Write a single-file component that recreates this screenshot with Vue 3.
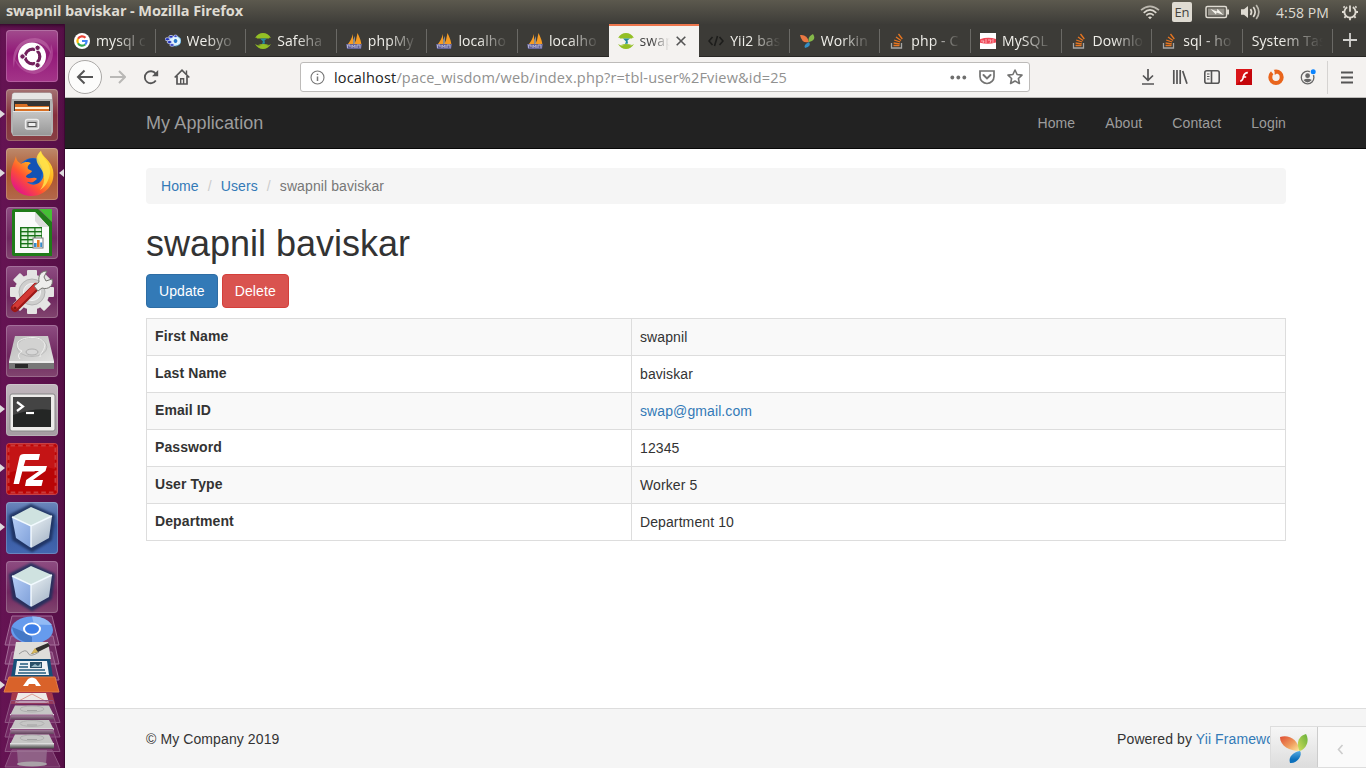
<script setup>
const tabs = [
  { icon: 'google', text: 'mysql c' },
  { icon: 'web', text: 'Webyo' },
  { icon: 'safe', text: 'Safeha' },
  { icon: 'pma', text: 'phpMy' },
  { icon: 'pma', text: 'localho' },
  { icon: 'pma', text: 'localho' },
  { icon: 'safe', text: 'swap', active: true },
  { icon: 'code', text: 'Yii2 bas' },
  { icon: 'yii', text: 'Workin' },
  { icon: 'so', text: 'php - C' },
  { icon: 'red', text: 'MySQL' },
  { icon: 'so', text: 'Downlo' },
  { icon: 'so', text: 'sql - ho' },
  { icon: '', text: 'System Tas' },
]
const launchers = [
  { id: 'ubuntu' },
  { id: 'files', run: true },
  { id: 'firefox', run: true, focus: true },
  { id: 'calc' },
  { id: 'settings' },
  { id: 'disk' },
  { id: 'terminal', run: true },
  { id: 'filezilla', run: true },
  { id: 'netbeans', run: true },
  { id: 'netbeans2' },
]
const rows = [
  ['First Name', 'swapnil'],
  ['Last Name', 'baviskar'],
  ['Email ID', 'swap@gmail.com'],
  ['Password', '12345'],
  ['User Type', 'Worker 5'],
  ['Department', 'Department 10'],
]
const gearTeeth = [0, 45, 90, 135, 180, 225, 270, 315]
</script>

<template>
  <div class="desktop">
    <header class="titlebar">
      <span class="wintitle">swapnil baviskar - Mozilla Firefox</span>
      <div class="indicators">
        <svg class="wifi" width="20" height="16" viewBox="0 0 20 16" fill="none" stroke="#dfdbd2" stroke-width="1.6">
          <path d="M1 6.2Q10 -1.6 19 6.2" opacity=".75" /><path d="M3.7 8.8Q10 3 16.3 8.8" /><path d="M6.3 11.3Q10 7.8 13.7 11.3" /><path d="M8 13.2L10 15.2L12 13.2Q10 11.6 8 13.2Z" fill="#dfdbd2" stroke="none" />
        </svg>
        <span class="lang">En</span>
        <svg class="battery" width="25" height="14" viewBox="0 0 25 14">
          <rect x="1" y="1.5" width="20.5" height="11" rx="1.5" fill="none" stroke="#dfdbd2" stroke-width="1.5" />
          <rect x="22" y="4.5" width="2" height="5" fill="#dfdbd2" /><rect x="3" y="3.5" width="16.5" height="7" fill="#95928a" />
          <path d="M5.5 4L12 6.4L12.4 3.8L18.5 10L11.6 7.6L11 9.6Z" fill="#f5f3ec" />
        </svg>
        <svg class="sound" width="21" height="16" viewBox="0 0 21 16" fill="none" stroke="#dfdbd2" stroke-width="1.7">
          <path d="M1 5.2H4L8 2V14L4 10.8H1Z" fill="#dfdbd2" stroke="none" /><path d="M10.5 5Q12.6 8 10.5 11" /><path d="M13.3 3Q17 8 13.3 13" /><path d="M16.2 1Q21.5 8 16.2 15" opacity=".75" />
        </svg>
        <span class="clock">4:58 PM</span>
        <svg class="power" width="18" height="18" viewBox="0 0 18 18" fill="none" stroke="#dfdbd2" stroke-width="1.8">
          <path d="M6.2 4.1A5.6 5.6 0 1 0 11.8 4.1" /><path d="M9 2.4V8.8" />
          <path d="M3.6 4.6L2.6 3.4M14.4 4.6L15.4 3.4M3.2 9H1M14.8 9H17M4.8 13.2L3.4 14.8M13.2 13.2L14.6 14.8M9 15V17.2" />
        </svg>
      </div>
    </header>

    <div class="body">
      <aside class="launcher">
        <div v-for="l in launchers" :key="l.id" class="tile" :class="'t-' + l.id">
          <i v-if="l.run" class="pip"></i>
          <i v-if="l.focus" class="pip right"></i>
          <svg width="52" height="52" viewBox="0 0 52 52">
            <g v-if="l.id === 'ubuntu'">
              <path d="M8 38C4 19 15 8 29 8C39 9 44 15 45 24C40 15 35 12 26 12C14 13 9 23 8 38Z" fill="#c879b2" opacity=".5" />
              <path d="M45 14C52 31 39 43 28 44C17 43 10 36 8 27C13 37 19 39 27 40C38 39 44 30 45 14Z" fill="#c879b2" opacity=".4" />
              <circle cx="26" cy="26.5" r="14" fill="#fff" /><circle cx="26.5" cy="26.5" r="7.3" fill="none" stroke="#72205c" stroke-width="3.2" />
              <path d="M26.5 26.5L15 26.5M26.5 26.5L32 17M26.5 26.5L32 36" stroke="#fff" stroke-width="1.5" />
              <g fill="#72205c" stroke="#fff" stroke-width="1"><circle cx="16.5" cy="26.5" r="2.7" /><circle cx="31.6" cy="17.8" r="2.7" /><circle cx="31.6" cy="35.2" r="2.7" /></g><circle cx="26.5" cy="26.5" r="5.5" fill="#fff" />
            </g>
            <g v-else-if="l.id === 'files'">
              <defs><linearGradient id="cab" x2="0" y2="1"><stop stop-color="#c6c6c6" /><stop offset="1" stop-color="#989898" /></linearGradient></defs>
              <path d="M6 5L8 3.5H44L46 5L47 16V43L45 47H7L5 43V16Z" fill="#b2b2b2" /><path d="M6.5 5L8 4H44L45.5 5L46 10H6Z" fill="#e6e6e5" />
              <rect x="8" y="12" width="36" height="10" fill="#333" /><path d="M9 15H21L22 17H43V22H9Z" fill="#d86f24" /><path d="M9 19H43" stroke="#fff0d4" stroke-width="2" />
              <path d="M7 22H45V46H7Z" fill="url(#cab)" /><path d="M7 22.5H45" stroke="#e7e7e7" />
              <rect x="19.5" y="30.5" width="13" height="9.5" rx="2" fill="#bbb" stroke="#ececec" stroke-width="1.4" /><rect x="22" y="33.5" width="8" height="4" fill="#eee" stroke="#555" />
            </g>
            <g v-else-if="l.id === 'firefox'">
              <defs><linearGradient id="ffx" x1=".9" y1="0" x2=".15" y2=".9"><stop offset="0" stop-color="#ffef3e" /><stop offset=".42" stop-color="#ffab1e" /><stop offset=".7" stop-color="#ff5232" /><stop offset="1" stop-color="#e31587" /></linearGradient></defs>
              <circle cx="27" cy="25" r="15" fill="#1769cf" /><path d="M20 13C28 7 36 13 37 22L33 36L17 34Z" fill="#123e9b" opacity=".5" />
              <path d="M10 8C10 13 13 14 15 16C19 13 23 14 25 15C22 17 21 19 22 21L26 23C25 26 20 26 20 29C24 32 28 28 31 31C27 34 28 35 21 34C29 41 40 33 37 23C36 17 32 14 32 9C32 6 34 4 35 3C36 9 45 12 47 22C50 37 38 48 26 48C12 48 4 38 5 27C5 18 8 15 10 8Z" fill="url(#ffx)" />
              <path d="M35 3C35 10 45 13 44 25C43 33 39 39 34 42C41 33 38 24 33 18C29 12 30 7 35 3Z" fill="#ffe34c" opacity=".85" />
            </g>
            <g v-else-if="l.id === 'calc'">
              <path d="M8 2H32L46 15V49H8Q6 49 6 47V4Q6 2 8 2Z" fill="#207b19" /><path d="M9 5H29L43 20V46H9Z" fill="#fafafa" /><path d="M29 5L43 20H34L29 14Z" fill="#dcdcdc" /><path d="M33 2H46V15Z" fill="#45bf35" />
              <rect x="14" y="20" width="22" height="21" fill="#187217" /><g fill="#dff3dc"><template v-for="c in 3" :key="c"><rect v-for="r in 5" :key="r" :x="8.5 + c * 7" :y="17.4 + r * 4" width="5.8" height="2.6" /></template></g>
              <rect x="27" y="31" width="10" height="10" fill="#fff" stroke="#777" /><path d="M29.3 40V36" stroke="#378bcb" stroke-width="2.6" /><path d="M32.3 40V33" stroke="#e57a20" stroke-width="2.6" /><path d="M35.2 40V35.5" stroke="#378bcb" stroke-width="2" />
            </g>
            <g v-else-if="l.id === 'settings'">
              <g fill="#e4e4e3"><rect v-for="a in gearTeeth" :key="a" x="21" y="4" width="10" height="12" rx="1" :transform="'rotate(' + a + ' 26 26)'" /><circle cx="26" cy="26" r="17.5" /></g>
              <circle cx="26" cy="26" r="13" fill="#cfcfce" stroke="#b4b4b4" /><circle cx="26" cy="26" r="8.5" fill="#e1dfe0" stroke="#f4f4f4" />
              <path d="M9 42L30 21" stroke="#9c1716" stroke-width="8" stroke-linecap="round" /><path d="M9 41L30 20" stroke="#d33935" stroke-width="5" stroke-linecap="round" />
              <path d="M28 20L33 16C32 9 35 5 41 5L38 11L40 15L46 13C48 20 42 24 36 22L32 25Z" fill="#eeeeec" stroke="#74746f" />
              <circle cx="9" cy="42" r="1.6" fill="#841412" />
            </g>
            <g v-else-if="l.id === 'disk'">
              <defs><linearGradient id="dsk" x2="1" y2="1"><stop stop-color="#bcbcbb" /><stop offset="1" stop-color="#e2e2e1" /></linearGradient></defs>
              <path d="M9 11H42L48 36L46 40H5L3 36Z" fill="url(#dsk)" /><path d="M3 36H48V44H3Z" fill="#777" /><path d="M3 37H48" stroke="#ededec" stroke-width="2" /><path d="M9 39H22V43H9Z" fill="#292929" />
              <ellipse cx="26" cy="22" rx="15" ry="9.5" fill="#d2d2d1" stroke="#b4b4b4" stroke-width=".8" /><path d="M12 17C18 11 37 10 39 20C38 27 34 28 34 32M12 17Q10 24 16 26Q10 30 14 34" fill="none" stroke="#efefee" /><ellipse cx="26" cy="27" rx="6" ry="3" fill="#d7d7d7" stroke="#a3a3a3" stroke-width=".8" />
            </g>
            <g v-else-if="l.id === 'terminal'">
              <rect x="4" y="10" width="45" height="37" rx="2" fill="#edecea" stroke="#888" /><rect x="7" y="13" width="38" height="30" fill="#242625" /><path d="M7 13H45V26Q30 23 7 31Z" fill="#444" /><path d="M11 18L17 22.5L11 27" fill="none" stroke="#fff" stroke-width="2.2" /><path d="M20 29H28" stroke="#fff" stroke-width="2.2" />
            </g>
            <g v-else-if="l.id === 'filezilla'">
              <rect x="1.5" y="1.5" width="49" height="49" rx="3" fill="#c93a3a" /><rect x="3.5" y="3.5" width="45" height="45" fill="#b90506" /><rect x="3" y="3" width="46" height="46" fill="none" stroke="#b90506" stroke-width="3.4" stroke-dasharray="0 7.66" stroke-linecap="round" /><path d="M3 3H49V26Q28 20 3 30Z" fill="#de3738" opacity=".3" />
              <path d="M14 11H34L32.6 17H19.5L17.7 23H30L28.6 28.5H16.3L13 41H7.5L13.5 14Q14 11 18 11Z" fill="#fff" />
              <path d="M24 23H41L39.5 28L27 37H37L35.5 43H19L20.2 37L33 28H22.6Z" fill="#fff" />
            </g>
            <g v-else>
              <defs><linearGradient :id="l.id + 'a'" x2="1" y2="1"><stop stop-color="#b5cdf6" /><stop offset="1" stop-color="#7e9fd8" /></linearGradient><linearGradient :id="l.id + 'b'" x2=".6" y2="1"><stop stop-color="#eaf1f4" /><stop offset="1" stop-color="#a9b8ca" /></linearGradient></defs>
              <path d="M5 14L25 4L47 14L44 37L26 48L8 37Z" fill="#1c2f5c" stroke="#1c2f5c" stroke-width="4" stroke-linejoin="round" class="soft" />
              <path d="M6 15L25 24V46L10 36Z" :fill="'url(#' + l.id + 'a)'" /><path d="M25 24L46 14L43 36L25 46Z" :fill="'url(#' + l.id + 'b)'" /><path d="M6 15L25 5L46 14L25 24Z" fill="#cfe2e0" /><path d="M6 15L25 24L46 14M25 24V45" fill="none" stroke="#f2faff" stroke-width="1.4" />
            </g>
          </svg>
        </div>
        <svg class="stack" width="65" height="153" viewBox="0 0 65 153">
          <defs><linearGradient id="slab" x2="0" y2="1"><stop stop-color="#eee" /><stop offset=".45" stop-color="#999" /><stop offset="1" stop-color="#484848" /></linearGradient></defs>
          <g stroke="#a36b98" fill="#b37aa8" fill-opacity=".27">
            <path d="M12 1H52L59 30H5Z" /><path d="M11 21H53L59 49H5Z" /><path d="M12 37H52L59 65H5Z" />
          </g>
          <ellipse cx="32" cy="15" rx="21" ry="13.5" fill="#669bed" /><path d="M32 1.5Q46 1 52 10L34 9.5Z" fill="#92bbf5" /><path d="M12 12L24 17L32 22V28Q15 27 12 12Z" fill="#4378c6" /><ellipse cx="32" cy="14" rx="9" ry="6.5" fill="#fff" /><ellipse cx="32" cy="14" rx="7" ry="4.8" fill="#3c7ee8" />
          <path d="M16 27H48L51 44H13Z" fill="#deddda" /><path d="M19 39Q26 33 28 38T39 37" fill="none" stroke="#999" /><path d="M31 39L36 33L48 28L50 31L38 37Z" fill="#30302e" /><path d="M31 39L35 33L38 37Z" fill="#d4b55a" />
          <path d="M14 44H50L53 62H11Z" fill="#174f78" /><path d="M17 46H47L49 60H15Z" fill="#f0f3f5" /><path d="M20 49H28M19 52H28M19 55H45M18 58H46" stroke="#245c7d" stroke-width="1.4" /><rect x="30" y="47" width="12" height="6" fill="#284f68" /><path d="M31 52L35 49L38 51L41 48V52Z" fill="#98b9c5" />
          <path d="M9 62H55L59 77H4Z" fill="#d9622a" stroke="#e27f46" /><path d="M23 71L28 64Q32 61 36 64L41 71H36L35 69H29L28 71Z" fill="#fff" />
          <path d="M12 77H52L55 89H10Z" fill="#a5384a" /><path d="M18 78H46L49 88H15Z" fill="#eeeae8" /><path d="M15 88L32 79L49 88" fill="none" stroke="#df9d95" />
          <g v-for="n in 3" :key="n" :transform="'translate(0 ' + (76 + n * 14.5) + ')'">
            <path d="M11 -5H53L60 17H5Z" fill="#854078" fill-opacity=".45" stroke="#8f5583" /><path d="M15 0H49L54 10H10Z" fill="#c6c6c5" /><path d="M10 8.5H54V14H10Z" fill="url(#slab)" /><ellipse cx="32" cy="3.5" rx="12" ry="3" fill="none" stroke="#aaa" stroke-width=".8" /><path d="M27 5H37" stroke="#999" stroke-width=".8" />
          </g>
          <path d="M12 135H52L60 152H5Z" fill="#a26c99" fill-opacity=".35" stroke="#8f5583" /><path d="M17 135H47L46 149H18Z" fill="#9a7694" opacity=".7" /><ellipse cx="32" cy="149" rx="15" ry="2.5" fill="#aaa2a8" />
        </svg>
        <i class="pip stackpip"></i>
      </aside>

      <section class="browser">
        <nav class="tabbar">
          <div v-for="(t, i) in tabs" :key="i" class="tab" :class="{ active: t.active, noicon: !t.icon, before: i === 5 }">
            <svg v-if="t.icon" class="fav" width="16" height="16" viewBox="0 0 16 16">
              <g v-if="t.icon === 'google'" fill="none" stroke-width="2.2"><circle cx="8" cy="8" r="8" fill="#fff" /><path d="M11.5 4.8A4.7 4.7 0 0 0 4 5.7" stroke="#ea4335" /><path d="M4 5.7A4.7 4.7 0 0 0 4 10.3" stroke="#fbbc05" /><path d="M4 10.3A4.7 4.7 0 0 0 11.2 11.5" stroke="#34a853" /><path d="M11.2 11.5A4.7 4.7 0 0 0 12.6 8H8" stroke="#4285f4" /></g>
              <g v-else-if="t.icon === 'web'"><ellipse cx="10" cy="8" rx="6" ry="5" fill="#daf4ff" stroke="#4fa9e4" stroke-dasharray="2 1" /><circle cx="10.5" cy="8" r="2.5" fill="#2578cc" stroke="#fff" /><g fill="#2333bd" stroke="#dfe8ff" stroke-width=".7"><ellipse cx="2.4" cy="6.2" rx="2.4" ry="1.5" /><ellipse cx="6" cy="3.8" rx="2.2" ry="1.4" /><ellipse cx="4.5" cy="9" rx="2.4" ry="1.5" /><ellipse cx="7" cy="12" rx="2.2" ry="1.3" /><ellipse cx="10.5" cy="3.2" rx="1.8" ry="1.1" /></g></g>
              <g v-else-if="t.icon === 'safe'"><path d="M0 5Q3 0 8 0T16 5Q12 3 8 5Q4 3 0 5ZM0 11Q3 16 8 16T16 11Q12 14 9 12Q4 14 0 11Z" fill="#93bf25" /><path d="M1 4Q7 2 15 4L14 5.5H2ZM3 12Q8 10 14 12L9 14Z" fill="#93bf25" /><path d="M5 5.5H12L9.5 7.5L10 10.5L7 11L8 8.5Z" fill="#258ba0" /></g>
              <g v-else-if="t.icon === 'pma'"><path d="M7 1V12H1Q5 8 7 1ZM11.5 0Q15 7 15.5 12H8Q10.5 7 11.5 0Z" fill="#f59b24" /><path d="M8.5 3V12H7.5V7Z" fill="#ddd" /><path d="M0 11H16L15 16H1Z" fill="#656497" /><path d="M1.5 15V12H4V14M6 15V12L7.5 14L9 12V15M11 15V12H14V15" fill="none" stroke="#c4c2dd" stroke-width=".8" /></g>
              <path v-else-if="t.icon === 'code'" d="M4.5 4L1 8L4.5 12M11.5 4L15 8L11.5 12M9.5 3L6.5 13" fill="none" stroke="#1d1d1b" stroke-width="1.6" />
              <g v-else-if="t.icon === 'yii'"><path d="M1 2Q8 1 10 9Q3 11 1 2Z" fill="#ea7843" /><path d="M14 1Q18 7 10 9Q8 4 14 1Z" fill="#85b94a" /><path d="M10 9Q13 13 6 15Q4 12 10 9Z" fill="#348ec4" /></g>
              <g v-else-if="t.icon === 'so'" fill="none"><path d="M2.5 10V15H12.5V10" stroke="#a6a6a5" stroke-width="1.3" /><path d="M4.5 12.5H10.5M4.6 10L10.8 10.8M5.2 7L11.2 9M7 4L12 7.5M9.5 1L13.3 6" stroke="#e97620" stroke-width="1.3" /></g>
              <g v-else><rect width="16" height="16" fill="#fff" /><path d="M0 6.2Q8 3.5 16 6V9.5Q8 12 0 9.7Z" fill="#ef4958" /><path d="M1 8H4L3 10M6 6V10M8 7H11L10 10M13 6V10" stroke="#ffd7da" fill="none" stroke-width=".7" /></g>
            </svg>
            <span class="tabtext">{{ t.text }}</span>
            <svg v-if="t.active" class="close" width="10" height="10" viewBox="0 0 10 10"><path d="M.7 .7L9.3 9.3M9.3 .7L.7 9.3" stroke="#555" stroke-width="1.6" /></svg>
          </div>
          <svg class="plus" width="14" height="14" viewBox="0 0 14 14"><path d="M7 0V14M0 7H14" stroke="#d3d2cf" stroke-width="1.8" /></svg>
        </nav>

        <div class="toolbar">
          <span class="back"><svg width="18" height="16" viewBox="0 0 18 16" fill="none" stroke="#555" stroke-width="2"><path d="M17 8H2M8.5 1.5L2 8L8.5 14.5" /></svg></span>
          <svg class="forward" width="16" height="14" viewBox="0 0 16 14" fill="none" stroke="#b9b8b6" stroke-width="2"><path d="M0 7H14.5M9 1L15 7L9 13" /></svg>
          <svg class="reload" width="16" height="16" viewBox="0 0 16 16" fill="none" stroke="#555" stroke-width="1.8"><path d="M12.8 11.6A6 6 0 1 1 12.6 4.6L14 6" /><path d="M15.2 1V7.2H9Z" stroke="none" fill="#555" /></svg>
          <svg class="home" width="16" height="16" viewBox="0 0 16 16" fill="none" stroke="#555" stroke-width="1.7"><path d="M.7 8.5L8 1.2L15.3 8.5M3 7V15H13V7" /><path d="M12.5 1.5V5M6.7 15V9.7H9.6V15" stroke-width="1.4" /></svg>
          <div class="urlbar">
            <svg class="info" width="15" height="15" viewBox="0 0 15 15"><circle cx="7.5" cy="7.5" r="6.5" fill="none" stroke="#777" stroke-width="1.1" /><path d="M7.5 6.5V11M7.5 3.7V5.1" stroke="#777" stroke-width="1.5" /></svg>
            <span class="url"><b>localhost</b>/pace_wisdom/web/index.php?r=tbl-user%2Fview&amp;id=25</span>
            <svg class="dots" width="17" height="5" viewBox="0 0 17 5" fill="#6e6e6d"><circle cx="2.3" cy="2.5" r="1.9" /><circle cx="8.3" cy="2.5" r="1.9" /><circle cx="14.3" cy="2.5" r="1.9" /></svg>
            <svg class="pocket" width="16" height="15" viewBox="0 0 16 15" fill="none" stroke="#737372" stroke-width="1.7"><path d="M1 1H15V6.5A7 7 0 0 1 1 6.5Z" /><path d="M4.5 5L8 8.4L11.5 5" stroke-width="2" stroke-linecap="round" /></svg>
            <svg class="star" width="16" height="16" viewBox="0 0 16 16"><path d="M8 1L10.1 5.5L15 6.1L11.4 9.5L12.4 14.5L8 12L3.6 14.5L4.6 9.5L1 6.1L5.9 5.5Z" fill="none" stroke="#737372" stroke-width="1.6" stroke-linejoin="round" /></svg>
          </div>
          <div class="tools">
            <svg width="16" height="16" viewBox="-1 0 16 16" fill="none" stroke="#555" stroke-width="1.7"><path d="M7 0V11M2 6.5L7 11.3L12 6.5M1 15H13" /></svg>
            <svg width="16" height="16" viewBox="0 0 16 16" fill="none" stroke="#555" stroke-width="1.7"><path d="M1.8 1V15M5 1V15M8.2 1V15M10.7 2L15 14.7" /></svg>
            <svg width="16" height="14" viewBox="0 0 16 14" fill="none" stroke="#555" stroke-width="1.6"><rect x=".8" y=".8" width="14.4" height="12.4" rx="2" /><path d="M7.5 1V13" /><path d="M3 4H5.5M3 6.5H5.5M3 9H5.5" stroke-width="1" /></svg>
            <svg width="16" height="16" viewBox="0 0 16 16"><rect width="16" height="16" fill="#c4060b" /><path d="M0 0H16L0 16Z" fill="#ed2226" opacity=".55" /><path d="M11.8 3.6Q8.4 3.6 7.4 7.6Q6.6 12 4.2 12.2M6.4 8H10.2" fill="none" stroke="#fff" stroke-width="1.7" /></svg>
            <svg width="16" height="16" viewBox="0 0 16 16"><circle cx="8" cy="8.3" r="5.7" fill="none" stroke="#e9651c" stroke-width="4" /><path d="M5 0L8 3.5L6 6L3 2.5Z" fill="#f4f2f0" /><path d="M6.4 1L9.8 3.4L6.8 6Z" fill="#e9651c" /></svg>
            <svg width="16" height="16" viewBox="0 0 16 16"><circle cx="7.6" cy="8.5" r="6.3" fill="none" stroke="#666" stroke-width="1.3" /><circle cx="7.6" cy="6.7" r="2.4" fill="#666" /><path d="M3.4 11Q7.6 8.5 11.9 11Q9.4 13.4 7.6 13.4Q5.4 13.4 3.4 11Z" fill="#666" /><circle cx="13" cy="3" r="3.2" fill="#f4f2f0" /><circle cx="13.2" cy="2.8" r="2.5" fill="#0a84ff" /></svg>
          </div>
          <span class="tooldiv"></span>
          <svg class="menu" width="12" height="13" viewBox="0 0 12 13"><path d="M0 1.5H12M0 6.5H12M0 11.5H12" stroke="#555" stroke-width="1.8" /></svg>
        </div>

        <div class="page">
          <nav class="navbar"><span class="brand">My Application</span><div class="links"><a>Home</a><a>About</a><a>Contact</a><a>Login</a></div></nav>
          <main>
            <div class="crumbs"><a>Home</a><i>/</i><a>Users</a><i>/</i><span>swapnil baviskar</span></div>
            <h1>swapnil baviskar</h1>
            <div class="buttons"><a class="btn update">Update</a><a class="btn delete">Delete</a></div>
            <div class="details">
              <div v-for="r in rows" :key="r[0]" class="row"><strong>{{ r[0] }}</strong><span :class="{ mail: r[0] === 'Email ID' }">{{ r[1] }}</span></div>
            </div>
          </main>
          <footer><span>© My Company 2019</span><span>Powered by <a>Yii Framework</a></span></footer>
          <div class="debug">
            <div class="logo"><svg width="30" height="32" viewBox="0 0 30 32">
              <defs><linearGradient id="yo" x2="1" y2="1"><stop stop-color="#df4c32" /><stop offset=".55" stop-color="#ee995c" /><stop offset="1" stop-color="#ffe99a" /></linearGradient><linearGradient id="yg" x1="1" y1="0" x2="0" y2="1"><stop stop-color="#66af3a" /><stop offset="1" stop-color="#d1df5c" /></linearGradient><linearGradient id="yb" x2="0" y2="1"><stop stop-color="#55a9df" /><stop offset=".7" stop-color="#0b70bc" /></linearGradient></defs>
              <path d="M1 4C9 1 20 6 20 18C11 18 1 13 1 4Z" fill="url(#yo)" /><path d="M27 1C31 8 27 16 20.5 18C17 11 19 3 27 1Z" fill="url(#yg)" /><path d="M21 18C24 22 18 31 11 30C9 24 14 19 21 18Z" fill="url(#yb)" />
            </svg></div>
            <div class="toggle"><svg width="7" height="11" viewBox="0 0 7 11"><path d="M5.5 1L1.5 5.5L5.5 10" fill="none" stroke="#ccc" stroke-width="1.6" /></svg></div>
          </div>
        </div>
      </section>
    </div>
  </div>
</template>

<style>
body { margin: 0; overflow: hidden; }
</style>

<style scoped>
* { box-sizing: border-box; }
svg { display: block; flex: none; }
.desktop { width: 1366px; height: 768px; display: flex; flex-direction: column; overflow: hidden; font-family: "Liberation Sans", Arial, sans-serif; font-size: 14px; color: #333; }
.titlebar { height: 24px; flex: none; display: flex; align-items: center; justify-content: space-between; background: linear-gradient(#5c594e, #3d3c38); color: #dfdbd2; font-family: "Open Sans", "Noto Sans", sans-serif; padding: 0 7px 0 6px; }
.wintitle { font-size: 14.5px; font-weight: 700; letter-spacing: -.09px; white-space: nowrap; line-height: 20px; padding-bottom: 2px; }
.indicators { display: flex; align-items: center; }
.lang { width: 20px; height: 20px; margin-left: 12px; display: flex; align-items: center; justify-content: center; background: #dfdbd2; color: #44423d; font-size: 13px; border-radius: 2px; }
.battery { margin-left: 13px; }
.sound { margin-left: 10px; }
.clock { width: 54px; margin-left: 15px; font-size: 14px; letter-spacing: .1px; white-space: nowrap; }
.power { margin-left: 11px; }
.body { flex: 1; display: flex; min-height: 0; }
.launcher { position: relative; width: 65px; flex: none; background: linear-gradient(90deg, #651353, #570f47); padding: 6px; display: flex; flex-direction: column; gap: 7px; border-right: 1px solid #3e0834; box-shadow: inset 0 4px 4px -3px #24051e; }
.soft { filter: blur(.8px); opacity: .85; }
.tile { position: relative; width: 52px; height: 52px; flex: none; border-radius: 4px; background: linear-gradient(#8e4d82, #6f275f 60%, #81456f); box-shadow: inset 0 0 0 1px rgba(255,255,255,.2); }
.t-ubuntu { background: linear-gradient(#a14c8d, #921978 45%, #a43589); }
.t-files { background: linear-gradient(#a47373, #862f3d 50%, #884044); }
.t-firefox { background: linear-gradient(#bd8a6c, #ad552d 50%, #b3684b); }
.t-terminal { background: linear-gradient(#c1b7bd, #a59ca2); }
.t-filezilla { background: #bd1114; }
.t-netbeans { background: linear-gradient(#6d87bc, #36579b 45%, #4367b1); }
.pip { position: absolute; left: -6px; top: 21px; border-left: 5px solid #dedbdd; border-top: 4.5px solid transparent; border-bottom: 4.5px solid transparent; }
.pip.right { left: auto; right: -6px; border-left: 0; border-right: 5px solid #dedbdd; }
.stack { position: absolute; left: 0; top: 591px; }
.stackpip { left: 0; top: 657px; }
.browser { flex: 1; min-width: 0; display: flex; flex-direction: column; }
.tabbar { height: 33px; flex: none; display: flex; background: #3c3b37; border-bottom: 1px solid #282724; font-family: "Open Sans", "Noto Sans", sans-serif; color: #f0efea; }
.tab { position: relative; width: 90.6px; height: 32px; flex: none; display: flex; align-items: center; padding: 2px 0 0 9px; }
.tab:not(.active):not(.before)::after { content: ""; position: absolute; right: 0; top: 5px; width: 1px; height: 24px; background: #6a6965; }
.tabtext { width: 53px; margin-left: 6px; overflow: hidden; white-space: nowrap; font-size: 14px; letter-spacing: .1px; line-height: 20px; -webkit-mask-image: linear-gradient(90deg, #000 38%, transparent 96%); mask-image: linear-gradient(90deg, #000 38%, transparent 96%); }
.noicon .tabtext { width: 74px; margin-left: 0; }
.tab.active { height: 33px; background: #f4f2f0; border-top: 2px solid #ed764d; color: #444; padding-top: 0; padding-bottom: 1px; }
.active .tabtext { width: 31px; }
.close { margin-left: 5px; }
.plus { margin: 9px 0 0 10px; }
.toolbar { height: 41px; flex: none; display: flex; align-items: center; background: #f4f2f0; border-bottom: 1px solid #bcbab8; }
.back { width: 34px; height: 34px; margin-left: 3px; display: flex; align-items: center; justify-content: center; border: 1px solid #aaa8a6; border-radius: 50%; background: #fcfcfb; flex: none; }
.forward { margin-left: 8px; }
.reload { margin-left: 17px; }
.home { margin-left: 15px; }
.urlbar { width: 730px; height: 30px; margin-left: 110px; flex: none; display: flex; align-items: center; border: 1px solid #bdbbb9; border-radius: 3px; background: #fff; padding-left: 9px; }
.url { width: 454px; margin-left: 9px; color: #919190; font-family: "Open Sans", "Noto Sans", sans-serif; font-size: 14.5px; letter-spacing: .18px; white-space: nowrap; }
.url b { color: #222; font-weight: 400; }
.dots { margin-left: 162px; }
.pocket { margin-left: 12px; }
.star { margin-left: 12px; }
.tools { display: flex; align-items: center; gap: 16px; margin-left: 110px; }
.tooldiv { width: 1px; height: 33px; background: #d5d3d1; margin-left: 11px; }
.menu { margin-left: 13px; }
.page { position: relative; flex: 1; min-height: 0; display: flex; flex-direction: column; background: #fff; letter-spacing: .1px; }
.navbar { height: 51px; flex: none; display: flex; justify-content: space-between; align-items: center; padding: 0 80px 0 81px; background: #222; border-bottom: 1px solid #080808; color: #9d9d9d; }
.brand { font-size: 18px; }
.links { display: flex; gap: 30px; }
main { flex: 1; padding: 19px 80px 0 81px; }
a, .mail { color: #337ab7; }
.links a { color: #9d9d9d; }
.crumbs { height: 36px; display: flex; align-items: center; padding-left: 15px; background: #f5f5f5; border-radius: 4px; color: #777; }
.crumbs i { width: 22px; text-align: center; color: #ccc; font-style: normal; }
h1 { margin: 20px 0 10px; font-size: 36px; line-height: 40px; font-weight: 500; letter-spacing: 0; }
.buttons { display: flex; gap: 4px; }
.btn { height: 34px; padding: 6px 12px; line-height: 20px; color: #fff; border: 1px solid #2e6da4; border-radius: 4px; background: #337ab7; }
.btn.delete { background: #d9534f; border-color: #d43f3a; }
.details { margin-top: 10px; border: 1px solid #ddd; border-bottom: 0; }
.row { height: 37px; display: flex; border-bottom: 1px solid #ddd; line-height: 20px; }
.row:nth-child(odd) { background: #f9f9f9; }
.row strong { width: 485px; padding: 7px 8px; border-right: 1px solid #ddd; }
.row span { padding: 8px; }
footer { height: 60px; flex: none; display: flex; justify-content: space-between; padding: 20px 80px 0 81px; line-height: 20px; background: #f5f5f5; border-top: 1px solid #ddd; }
.debug { position: absolute; right: 0; bottom: 0; display: flex; width: 96px; height: 42px; border: 1px solid #ddd; border-right: 0; background: #fafafa; }
.logo { width: 47px; display: flex; align-items: center; justify-content: center; background: linear-gradient(#f6f6f6, #ddd); border-right: 1px solid #ccc; padding-top: 4px; }
.toggle { flex: 1; display: flex; align-items: center; justify-content: center; padding: 4px 3px 0 0; }
</style>
